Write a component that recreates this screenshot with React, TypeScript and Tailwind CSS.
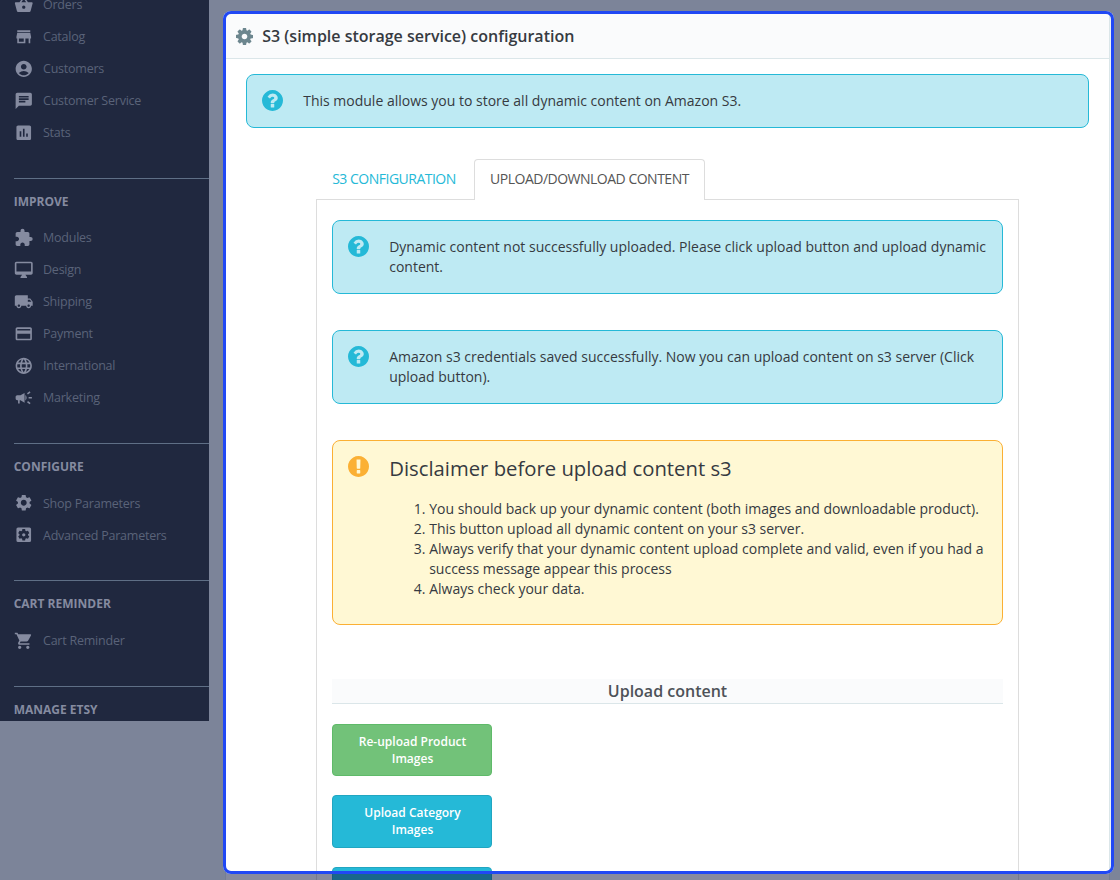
import type { ReactNode } from "react";
import type { IconType } from "react-icons";
import {
  MdShoppingBasket,
  MdStore,
  MdAccountCircle,
  MdChat,
  MdAssessment,
  MdExtension,
  MdOutlineDesktopMac,
  MdLocalShipping,
  MdPayment,
  MdLanguage,
  MdCampaign,
  MdSettings,
  MdSettingsApplications,
  MdShoppingCart,
} from "react-icons/md";

const QUESTION =
  "M1024 1376v-192q0-14-9-23t-23-9h-192q-14 0-23 9t-9 23v192q0 14 9 23t23 9h192q14 0 23-9t9-23zm256-672q0-88-55.5-163t-138.5-116-170-41q-243 0-371 213-15 24 8 42l132 100q7 6 19 6 16 0 25-12 53-68 86-92 34-24 86-24 48 0 85.5 26t37.5 59q0 38-20 61t-68 45q-63 28-115.5 86.5t-52.5 125.5v36q0 14 9 23t23 9h192q14 0 23-9t9-23q0-19 21.5-49.5t54.5-49.5q32-18 49-28.5t46-35 44.5-48 28-60.5 12.5-81zm384 192q0 209-103 385.5t-279.5 279.5-385.5 103-385.5-103-279.5-279.5-103-385.5 103-385.5 279.5-279.5 385.5-103 385.5 103 279.5 279.5 103 385.5z";
const EXCLAMATION =
  "M896 128q209 0 385.5 103t279.5 279.5 103 385.5-103 385.5-279.5 279.5-385.5 103-385.5-103-279.5-279.5-103-385.5 103-385.5 279.5-279.5 385.5-103zm128 1247v-190q0-14-9-23.5t-22-9.5h-192q-13 0-23 10t-10 23v190q0 13 10 23t23 10h192q13 0 22-9.5t9-23.5zm-2-344l18-621q0-12-10-18-10-8-24-8h-220q-14 0-24 8-10 6-10 18l17 621q0 10 10 17.5t24 7.5h185q14 0 23.5-7.5t10.5-17.5z";
const COG =
  "M1152 896q0-106-75-181t-181-75-181 75-75 181 75 181 181 75 181-75 75-181zm512-109v222q0 12-8 23t-20 13l-185 28q-19 54-39 91 35 50 107 138 10 12 10 25t-9 23q-27 37-99 108t-94 71q-12 0-26-9l-138-108q-44 23-91 38-16 136-29 186-7 28-36 28h-222q-14 0-24.5-8.5t-11.5-21.5l-28-184q-49-16-90-37l-141 107q-10 9-25 9-14 0-25-11-126-114-165-168-7-10-7-23 0-12 8-23 15-21 51-66.5t54-70.5q-27-50-41-99l-183-27q-13-2-21-12.5t-8-23.5v-222q0-12 8-23t19-13l186-28q14-46 39-92-40-57-107-138-10-12-10-24 0-10 9-23 26-36 98.5-107.5t94.5-71.5q13 0 26 10l138 107q44-23 91-38 16-136 29-186 7-28 36-28h222q14 0 24.5 8.5t11.5 21.5l28 184q49 16 90 37l142-107q9-9 24-9 13 0 25 10 129 119 165 170 7 8 7 22 0 12-8 23-15 21-51 66.5t-54 70.5q26 50 41 98l183 28q13 2 21 12.5t8 23.5z";

function Glyph({ d, className }: { d: string; className: string }) {
  return (
    <svg viewBox="128 128 1536 1536" className={className} fill="currentColor">
      <path d={d} />
    </svg>
  );
}

type Item = { icon: IconType; label: string };

const sections: { title?: string; items: Item[] }[] = [
  {
    items: [
      { icon: MdShoppingBasket, label: "Orders" },
      { icon: MdStore, label: "Catalog" },
      { icon: MdAccountCircle, label: "Customers" },
      { icon: MdChat, label: "Customer Service" },
      { icon: MdAssessment, label: "Stats" },
    ],
  },
  {
    title: "IMPROVE",
    items: [
      { icon: MdExtension, label: "Modules" },
      { icon: MdOutlineDesktopMac, label: "Design" },
      { icon: MdLocalShipping, label: "Shipping" },
      { icon: MdPayment, label: "Payment" },
      { icon: MdLanguage, label: "International" },
      { icon: MdCampaign, label: "Marketing" },
    ],
  },
  {
    title: "CONFIGURE",
    items: [
      { icon: MdSettings, label: "Shop Parameters" },
      { icon: MdSettingsApplications, label: "Advanced Parameters" },
    ],
  },
  { title: "CART REMINDER", items: [{ icon: MdShoppingCart, label: "Cart Reminder" }] },
  { title: "MANAGE ETSY", items: [] },
];

function Sidebar() {
  return (
    <nav className="relative z-20 h-[721px] w-[209px] shrink-0 overflow-hidden bg-[#20283f]">
      <div className="-mt-[10.8px]">
        {sections.map((section, i) => (
          <section key={i} className="pb-[28.8px]">
            {section.title && (
              <h2 className="ml-[13.7px] flex h-[44.4px] items-center border-t border-[#5f6f86] pt-[2.6px] text-[12px] font-bold text-[#858ba0]">
                {section.title}
              </h2>
            )}
            <ul>
              {section.items.map(({ icon: Icon, label }) => (
                <li key={label} className="flex h-8 items-center pl-3.5 text-[12.5px] leading-[18px] tracking-[-0.23px] text-[#5a6379]">
                  <Icon className="-mt-[0.8px] mr-[9.5px] size-[19.5px] text-[#858ba0]" />
                  {label}
                </li>
              ))}
            </ul>
          </section>
        ))}
      </div>
    </nav>
  );
}

function Info({ children, className }: { children: ReactNode; className: string }) {
  return (
    <div className={`flex rounded-[8px] border border-[#25b9d7] bg-[#beeaf3] px-[15px] pt-[15px] text-sm leading-5 ${className}`}>
      <Glyph d={QUESTION} className="mr-[20.2px] size-[21px] shrink-0 text-[#25b9d7]" />
      <p className="pt-px">{children}</p>
    </div>
  );
}

export default function App() {
  return (
    <div className="relative flex h-[880px] w-[1120px] overflow-hidden bg-[#ebf3f4] font-['Open_Sans',sans-serif] text-[#363a41]">
      <Sidebar />
      <main className="h-[880px] flex-1 overflow-hidden pl-4 pt-[13px]">
        <div className="h-[900px] w-[885px] border border-[#dbe6e9] bg-white">
          <header className="flex h-[45px] items-center border-b border-[#dbe6e9] bg-[#fafbfc] pl-2.5">
            <Glyph d={COG} className="mr-[9.2px] size-[17px] text-[#6c868e]" />
            <h1 className="text-base font-semibold">S3 (simple storage service) configuration</h1>
          </header>
          <div className="px-5 pt-[15px]">
            <Info className="h-[54px]">This module allows you to store all dynamic content on Amazon S3.</Info>
            <div className="ml-[70px] mt-[31px] w-[703px]">
              <div className="flex h-[41px] text-sm tracking-[-0.5px]">
                <button className="w-[158px] pb-px pr-0.5 text-[#25b9d7]">S3 CONFIGURATION</button>
                <button className="relative z-10 w-[231px] rounded-t-[4px] border border-b-0 border-[#ddd] bg-white pb-[3px] text-[#555]">
                  UPLOAD/DOWNLOAD CONTENT
                </button>
              </div>
              <div className="-mt-px h-[760px] border border-[#ddd] px-[15px] pt-5">
                <Info className="h-[74px]">
                  Dynamic content not successfully uploaded. Please click upload button and upload dynamic content.
                </Info>
                <Info className="mt-9 h-[74px]">
                  Amazon s3 credentials saved successfully. Now you can upload content on s3 server (Click upload button).
                </Info>
                <div className="mt-9 flex h-[185px] rounded-[8px] border border-[#fbb034] bg-[#fff8d4] px-[15px] pt-[15px]">
                  <Glyph d={EXCLAMATION} className="mr-[20.2px] size-[21px] shrink-0 text-[#fbb034]" />
                  <div>
                    <h2 className="text-[20.3px] leading-[25px]">Disclaimer before upload content s3</h2>
                    <ol className="mt-[18px] list-decimal pl-10 text-sm leading-5">
                      <li>You should back up your dynamic content (both images and downloadable product).</li>
                      <li>This button upload all dynamic content on your s3 server.</li>
                      <li>
                        Always verify that your dynamic content upload complete and valid, even if you had a success
                        message appear this process
                      </li>
                      <li>Always check your data.</li>
                    </ol>
                  </div>
                </div>
                <h3 className="mt-[54px] flex h-[25px] items-center justify-center border-b border-[#dbe6e9] bg-[#fafbfc] text-base font-semibold text-[#4d5258]">
                  Upload content
                </h3>
                <div className="mt-5 flex w-[160px] flex-col text-[12px] font-semibold leading-[17px] text-white">
                  <button className="h-[52px] rounded-[4px] border border-[#5fba69] bg-[#72c279] pl-[25px] pr-6">
                    Re-upload Product Images
                  </button>
                  <button className="mt-[19px] h-[53px] rounded-[4px] border border-[#21a6c1] bg-[#25b9d7] pb-0.5 pl-[25px] pr-6">
                    Upload Category Images
                  </button>
                  <div className="mt-[19px] h-[53px] rounded-[4px] border border-[#21a6c1] bg-[#25b9d7]" />
                </div>
              </div>
            </div>
          </div>
        </div>
      </main>
      <div className="pointer-events-none absolute left-[223px] top-[11px] z-10 h-[863px] w-[891px] rounded-[8px] border-[3px] border-[#2048f4] shadow-[0_0_0_1200px_rgba(13,21,62,0.5)]" />
    </div>
  );
}
